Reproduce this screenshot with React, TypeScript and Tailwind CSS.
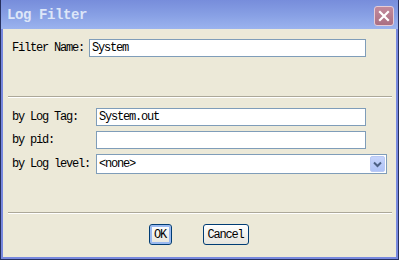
import React from 'react';

const mono = "font-['Liberation_Mono',monospace] text-[12px] tracking-[-1.2px] text-black";

function Field({ value, width }: { value?: string; width: string }) {
  return (
    <div
      className={`h-[18px] ${width} border border-[#7f9db9] bg-white pl-[2px] flex items-center ${mono}`}
    >
      {value}
    </div>
  );
}

function Separator() {
  return (
    <div className="mx-[5px] w-[384px]">
      <div className="h-px bg-[#aca899]" />
      <div className="h-px bg-white" />
    </div>
  );
}

function Button({ label, focused, width }: { label: string; focused?: boolean; width: string }) {
  return (
    <div
      className={`h-[21px] ${width} rounded-[3px] border border-[#003c74] bg-gradient-to-b from-white to-[#e6e4dc] flex items-center justify-center ${mono} ${
        focused ? 'shadow-[inset_0_0_0_2px_#9ab9f0]' : ''
      }`}
    >
      {label}
    </div>
  );
}

export default function App() {
  return (
    <div className="w-[399px] h-[260px] flex flex-col bg-[#7788de] border-l border-r border-b border-[#26305e] overflow-hidden">
      {/* Title bar */}
      <div className="h-[29px] shrink-0 flex items-center justify-between pl-[6px] pr-[4px] bg-gradient-to-b from-[#778ddb] via-[#879fe4] to-[#9bb3ee]">
        <span className="font-['Liberation_Mono',monospace] font-bold text-[14px] tracking-[-0.4px] text-[#dde6f8] mt-[1px]">
          Log Filter
        </span>
        <div className="w-[20px] h-[20px] mt-[2px] rounded-[3px] border border-[#e6ccd6] bg-gradient-to-b from-[#c28a9c] to-[#aa6f82] flex items-center justify-center">
          <svg width="12" height="12" viewBox="0 0 12 12">
            <path d="M2 2L10 10M10 2L2 10" stroke="white" strokeWidth="2.2" strokeLinecap="square" />
          </svg>
        </div>
      </div>

      {/* Body */}
      <div className="flex-1 mx-[2px] mb-[2px] bg-[#ece9d8] flex flex-col">
        <div className="mt-[10px] flex items-center pl-[9px]">
          <span className={`w-[77px] ${mono}`}>Filter Name:</span>
          <Field value="System" width="w-[277px]" />
        </div>

        <div className="mt-[39px]">
          <Separator />
        </div>

        <div className="mt-[10px] flex flex-col gap-[5px] pl-[9px]">
          <div className="flex items-center">
            <span className={`w-[84px] ${mono}`}>by Log Tag:</span>
            <Field value="System.out" width="w-[270px]" />
          </div>
          <div className="flex items-center">
            <span className={`w-[84px] ${mono}`}>by pid:</span>
            <Field width="w-[270px]" />
          </div>
          <div className="flex items-center">
            <span className={`w-[84px] ${mono}`}>by Log level:</span>
            <div className="h-[20px] w-[291px] border border-[#7f9db9] bg-white flex items-center justify-between pl-[2px] pr-px">
              <span className={mono}>&lt;none&gt;</span>
              <div className="w-[15px] h-[16px] rounded-[2px] border border-[#b9c9f4] bg-gradient-to-b from-[#c6d4fb] to-[#afc3f7] flex items-center justify-center">
                <svg width="9" height="7" viewBox="0 0 9 7">
                  <path d="M1 1.5L4.5 5L8 1.5" fill="none" stroke="#4d6185" strokeWidth="2" />
                </svg>
              </div>
            </div>
          </div>
        </div>

        <div className="mt-[38px]">
          <Separator />
        </div>

        <div className="mt-[10px] flex justify-center gap-[31px] pr-[2px]">
          <Button label="OK" focused width="w-[23px]" />
          <Button label="Cancel" width="w-[46px]" />
        </div>
      </div>
    </div>
  );
}
